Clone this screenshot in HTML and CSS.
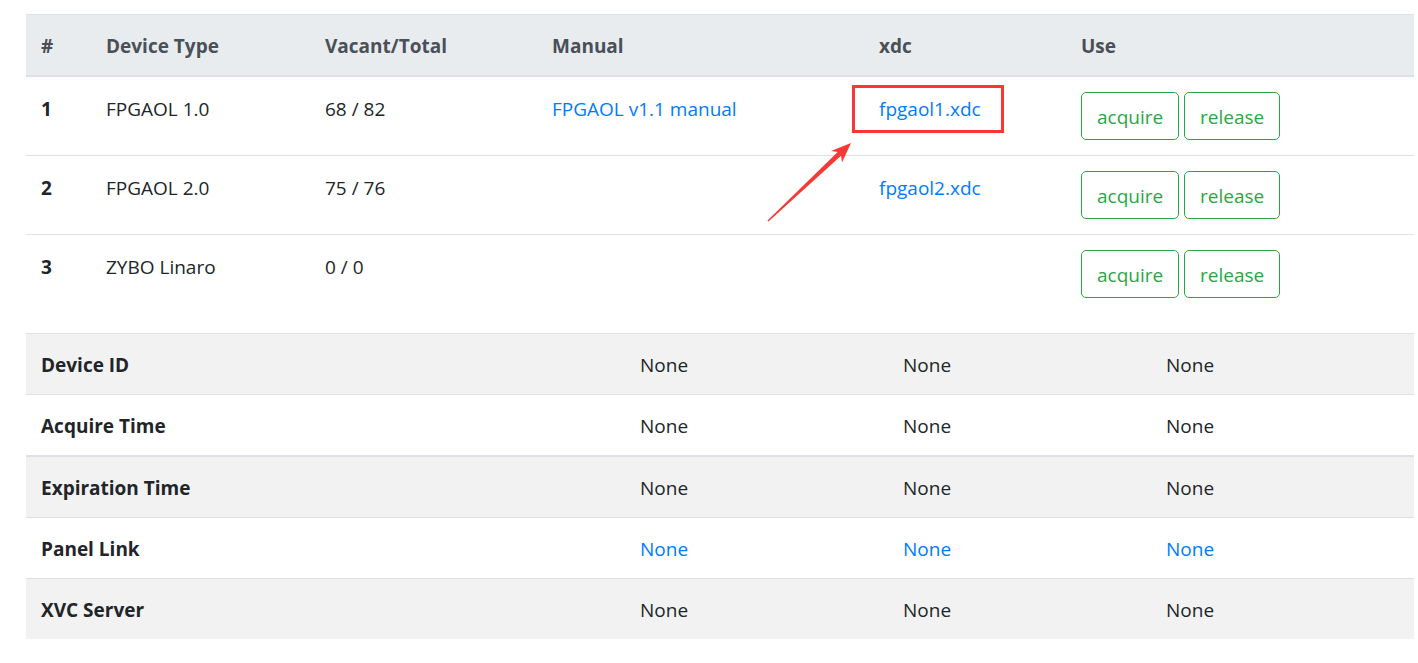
FILE: index.html
```html
<!DOCTYPE html>
<html lang="en">
<head>
<meta charset="utf-8">
<title>Devices</title>
<link rel="stylesheet" href="styles.css">
</head>
<body>
<main class="page">
  <table class="tbl devices">
    <colgroup>
      <col class="c-num"><col class="c-type"><col class="c-vac"><col class="c-man"><col class="c-xdc"><col class="c-use">
    </colgroup>
    <thead>
      <tr><th>#</th><th>Device Type</th><th>Vacant/Total</th><th>Manual</th><th>xdc</th><th>Use</th></tr>
    </thead>
    <tbody>
      <tr>
        <th>1</th><td>FPGAOL 1.0</td><td>68 / 82</td>
        <td><a href="#">FPGAOL v1.1 manual</a></td>
        <td><a href="#">fpgaol1.xdc</a></td>
        <td><button class="btn">acquire</button> <button class="btn">release</button></td>
      </tr>
      <tr>
        <th>2</th><td>FPGAOL 2.0</td><td>75 / 76</td>
        <td></td>
        <td><a href="#">fpgaol2.xdc</a></td>
        <td><button class="btn">acquire</button> <button class="btn">release</button></td>
      </tr>
      <tr>
        <th>3</th><td>ZYBO Linaro</td><td>0 / 0</td>
        <td></td>
        <td></td>
        <td><button class="btn">acquire</button> <button class="btn">release</button></td>
      </tr>
    </tbody>
  </table>

  <table class="tbl info">
    <colgroup>
      <col class="c-label"><col class="c-val"><col class="c-val"><col class="c-val">
    </colgroup>
    <tbody>
      <tr class="odd"><th>Device ID</th><td>None</td><td>None</td><td>None</td></tr>
      <tr><th>Acquire Time</th><td>None</td><td>None</td><td>None</td></tr>
      <tr class="odd sep"><th>Expiration Time</th><td>None</td><td>None</td><td>None</td></tr>
      <tr><th>Panel Link</th><td><a href="#">None</a></td><td><a href="#">None</a></td><td><a href="#">None</a></td></tr>
      <tr class="odd"><th>XVC Server</th><td>None</td><td>None</td><td>None</td></tr>
    </tbody>
  </table>

  <svg class="annot" width="1418" height="663" viewBox="0 0 1418 663" aria-hidden="true">
    <rect x="853.5" y="86.5" width="149" height="45" fill="none" stroke="#fb3636" stroke-width="3"/>
    <polygon fill="#f53a35" points="767.5,220.4 837.7,152.1 831,150.9 851,143 842,162.5 841.1,155.7 768.5,221.6"/>
  </svg>
</main>
</body>
</html>
```

FILE: styles.css
```css
html, body {
  margin: 0;
  padding: 0;
  background: #ffffff;
}

body {
  font-family: "Open Sans", "Noto Sans", "Liberation Sans", sans-serif;
  font-size: 19px;
  line-height: 30px;
  color: #212529;
}

.page {
  position: relative;
  width: 1418px;
  padding: 14px 4px 0 26px;
  box-sizing: border-box;
}

.tbl {
  width: 1388px;
  border-collapse: collapse;
  table-layout: fixed;
  margin-bottom: 20px;
}

.tbl th,
.tbl td {
  padding: 15px;
  text-align: left;
  vertical-align: top;
  border-top: 1px solid #dee2e6;
  white-space: nowrap;
}

.tbl th {
  font-weight: 700;
}

.c-num { width: 65px; }
.c-type { width: 219px; }
.c-vac { width: 227px; }
.c-man { width: 327px; }
.c-xdc { width: 202px; }
.c-use { width: 348px; }

.devices thead th {
  background: #e9ecef;
  color: #495057;
  vertical-align: bottom;
  padding-top: 16px;
  padding-bottom: 14px;
  border-bottom: 2px solid #dee2e6;
}

.devices tbody th,
.devices tbody td {
  padding-top: 17px;
  padding-bottom: 13px;
}

.devices tbody td:last-child {
  padding-top: 15px;
  padding-bottom: 15px;
}

a {
  color: #007bff;
  text-decoration: none;
}

.btn {
  font-family: inherit;
  font-size: 19px;
  line-height: 30px;
  padding: 9px 15px 7px;
  color: #28a745;
  background: transparent;
  border: 1px solid #28a745;
  border-radius: 5px;
  cursor: pointer;
}

.c-label { width: 599px; }
.c-val { width: 263px; }

.info th,
.info td {
  border-top-color: #e0e0e0;
  padding-top: 16px;
  padding-bottom: 14px;
}

.info tr.odd {
  background: #f2f2f2;
}

.info tr.sep th,
.info tr.sep td {
  border-top: 2px solid #dee2e6;
}

.annot {
  position: absolute;
  left: 0;
  top: 0;
  pointer-events: none;
}
```
